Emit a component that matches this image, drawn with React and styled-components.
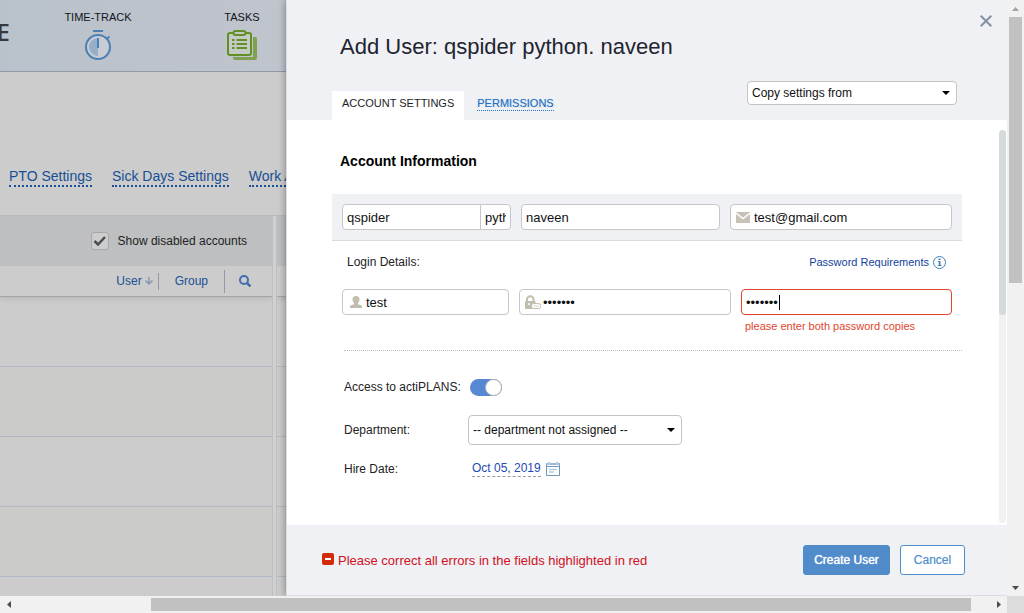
import React from "react";
import styled, { createGlobalStyle } from "styled-components";

const GlobalStyle = createGlobalStyle`
  *, *::before, *::after { box-sizing: border-box; }
  html, body { margin: 0; height: 100%; }
  body, button, input, select { font-family: "Liberation Sans", Arial, sans-serif; }
  body { font-size: 12px; color: #222; }
  #root { height: 100%; }
  button, input, select { margin: 0; }
`;

/* ---------- window frame ---------- */
const Frame = styled.div`
  display: grid;
  grid-template-columns: minmax(0, 1fr) 17px;
  grid-template-rows: minmax(0, 1fr) 17px;
  height: 100vh;
  overflow: hidden;
`;
const Screen = styled.main`
  display: flex;
  min-width: 0;
  overflow: hidden;
  background: #cccccc;
`;
const Bar = styled.div`
  display: flex;
  flex-direction: ${(p) => (p.$vertical ? "column" : "row")};
  background: #f1f1f1;
  padding: ${(p) => (p.$vertical ? "0 2px" : "2px 0")};
`;
const BarArrow = styled.span`
  display: flex;
  flex: 0 0 17px;
  align-items: center;
  justify-content: center;
  svg { display: block; }
`;
const BarPart = styled.span`
  flex: ${(p) => p.$size} 1 0;
  background: ${(p) => (p.$thumb ? "#c1c1c1" : "transparent")};
`;
const Corner = styled.div`
  background: #dcdcdc;
`;

/* ---------- page behind the dialog ---------- */
const Backdrop = styled.section`
  display: flex;
  flex-direction: column;
  flex: 0 0 286px;
  min-width: 0;
  overflow: hidden;
`;
const TopNav = styled.header`
  display: flex;
  flex: 0 0 72px;
  background: linear-gradient(90deg, #b9c2cb 0, #bec3cb 180px, #c0c4cd 100%);
  border-bottom: 1px solid #8f9aa8;
`;
const Logo = styled.div`
  display: flex;
  justify-content: flex-end;
  flex: 0 0 10px;
  overflow: hidden;
  margin-right: 16px;
  padding-top: 15px;
  font: 600 24px/34px "Open Sans", sans-serif;
  color: #35383c;
`;
const NavItem = styled.a`
  display: flex;
  flex: 0 0 144px;
  flex-direction: column;
  align-items: center;
  gap: 5px;
  padding-top: 10px;
  font-size: 11px;
  line-height: 14px;
  color: #10141c;
  text-decoration: none;
`;
const SubNav = styled.nav`
  display: flex;
  gap: 20px;
  flex: 0 0 144px;
  padding: 96px 0 0 9px;
  border-bottom: 1px solid #b6babf;
`;
const SubLink = styled.a`
  align-self: flex-start;
  flex: none;
  font-size: 14px;
  line-height: 17px;
  color: #184f95;
  text-decoration: none;
  border-bottom: 2px dotted #184f95;
`;
const Columns = styled.div`
  display: flex;
  flex: 1;
  min-height: 0;
  overflow: hidden;
`;
const Column = styled.div`
  display: flex;
  flex-direction: column;
  flex: ${(p) => p.$flex};
`;
const Splitter = styled.div`
  flex: 0 0 5px;
  background: #d0d0d0;
  border: solid #bebfc1;
  border-width: 0 1px;
`;
const Toolbar = styled.div`
  display: flex;
  flex: 0 0 50px;
  align-items: center;
  justify-content: flex-end;
  padding-right: 25px;
  background: #bdbfc1;
`;
const CheckLabel = styled.label`
  display: flex;
  align-items: center;
  gap: 9px;
  line-height: 16px;
`;
const CheckBox = styled.input`
  appearance: none;
  width: 18px;
  height: 18px;
  border: 1px solid #a8a8a8;
  border-radius: 3px;
  background: #cdcdcd;
`;
const CheckWrap = styled.span`
  position: relative;
  display: flex;
  svg { position: absolute; inset: 0; pointer-events: none; }
`;
const ListHead = styled.div`
  display: flex;
  flex: 0 0 31px;
  align-items: center;
  justify-content: flex-end;
  padding-right: 21px;
  background: #cccccc;
  border-bottom: 1px solid #a4a5a6;
  box-shadow: 0 2px 6px rgba(0, 0, 0, 0.1);
  clip-path: inset(0 0 -12px 0);
`;
const HeadButton = styled.button`
  display: flex;
  align-items: center;
  gap: 3px;
  padding: 0;
  border: 0;
  background: none;
  font-size: 12px;
  color: #184f95;
`;
const Divider = styled.span`
  width: 1px;
  height: ${(p) => p.$height}px;
  margin: ${(p) => p.$margin};
  background: #969a9f;
`;
const ListRow = styled.div`
  flex: 0 0 70px;
  border-bottom: 1px solid #b0b9c4;
  background: ${(p) => (p.$odd ? "#cbcbc9" : "transparent")};
`;

/* ---------- dialog ---------- */
const Dialog = styled.section`
  position: relative;
  display: flex;
  flex-direction: column;
  flex: 1;
  min-width: 0;
  background: #fff;
  border: solid #dcdde0;
  border-width: 0 0 1px 1px;
  box-shadow: 0 0 8px rgba(0, 0, 0, 0.4);
`;
const DialogHead = styled.header`
  display: flex;
  flex: 0 0 120px;
  flex-direction: column;
  justify-content: space-between;
  background: #f0f1f5;
`;
const TitleRow = styled.div`
  display: flex;
  justify-content: space-between;
  padding: 10px 10px 0 53px;
`;
const Title = styled.h1`
  margin: 22px 0 0;
  font-size: 22px;
  line-height: 30px;
  font-weight: 400;
  color: #22242f;
`;
const CloseButton = styled.button`
  display: flex;
  align-self: flex-start;
  align-items: center;
  justify-content: center;
  width: 22px;
  height: 22px;
  padding: 0;
  border: 0;
  background: none;
`;
const TabRow = styled.div`
  display: flex;
  justify-content: space-between;
  align-items: flex-end;
  padding: 0 50px 0 45px;
`;
const Tabs = styled.nav`
  display: flex;
  align-items: center;
`;
const ActiveTab = styled.button`
  height: 29px;
  padding: 0 10px 6px;
  border: 0;
  background: #fff;
  font-size: 11px;
  color: #1c1e29;
`;
const TabLink = styled.a`
  margin: 0 0 4px 13px;
  font-size: 11px;
  line-height: 14px;
  color: #2471c4;
  text-decoration: none;
  text-shadow: 0 0 1px rgba(36, 113, 196, 0.4);
  border-bottom: 1px dotted #2471c4;
`;
const SelectWrap = styled.span`
  position: relative;
  display: block;
  width: ${(p) => p.$width}px;
  margin-bottom: ${(p) => p.$bottom || 0}px;
  svg {
    position: absolute;
    right: 7px;
    top: 50%;
    margin-top: -2px;
    pointer-events: none;
  }
`;
const Select = styled.select`
  appearance: none;
  display: block;
  width: 100%;
  height: ${(p) => p.$height}px;
  padding: 0 20px 0 4px;
  border: 1px solid #c4c4c4;
  border-radius: 4px;
  background: #fff;
  font-size: 12px;
  color: #111;
`;
const DialogBody = styled.div`
  display: flex;
  flex: 1;
  min-height: 0;
`;
const Form = styled.form`
  flex: 1;
  min-width: 0;
  padding: 0 37px 0 45px;
`;
const InnerTrack = styled.div`
  flex: 0 0 7px;
  margin: 10px 1px 2px 0;
  border-radius: 4px;
  background: #f0f2f2;
`;
const InnerThumb = styled.div`
  height: 47%;
  border-radius: 4px;
  background: #d5dadd;
`;
const SectionTitle = styled.h2`
  margin: 32px 0 24px 8px;
  font-size: 14px;
  line-height: 18px;
  font-weight: 700;
  color: #000;
`;
const Fields = styled.div`
  display: grid;
  grid-template-columns: ${(p) => p.$columns};
  gap: 10px;
  align-items: start;
  padding: 0 10px;
`;
const NameBand = styled(Fields)`
  padding: 10px;
  background: #f0f1f5;
  border-bottom: 1px solid #d8dade;
`;
const Field = styled.label`
  position: relative;
  display: flex;
  align-items: center;
  gap: ${(p) => p.$gap || 4}px;
  height: 26px;
  padding-left: ${(p) => p.$left || 4}px;
  overflow: hidden;
  background: #fff;
  border: 1px solid ${(p) => (p.$error ? "#e0452f" : "#c6c7c8")};
  border-radius: 4px;
  svg { flex: none; }
`;
const Input = styled.input`
  flex: 1 1 0;
  min-width: 0;
  height: 24px;
  padding: 0;
  border: 0;
  outline: 0;
  background: none;
  font-size: 13px;
  color: #111;
`;
const SplitField = styled.div`
  display: grid;
  grid-template-columns: minmax(0, 1fr) 30px;
  height: 26px;
  background: #fff;
  border: 1px solid #c6c7c8;
  border-radius: 4px;
`;
const SplitInput = styled(Input)`
  padding: 0 4px;
  border-left: ${(p) => (p.$second ? "1px solid #c6c7c8" : "0")};
`;
const Caret = styled.span`
  position: absolute;
  left: 37px;
  top: 5px;
  width: 1px;
  height: 15px;
  background: #000;
`;
const LoginHead = styled.div`
  display: flex;
  align-items: center;
  justify-content: space-between;
  height: 48px;
  padding: 0 16px 6px 15px;
`;
const HelpLink = styled.a`
  display: flex;
  align-items: center;
  gap: 4px;
  font-size: 11px;
  color: #123f9c;
  text-decoration: none;
`;
const ErrorNote = styled.p`
  margin: 4px 0 0 4px;
  font-size: 11px;
  line-height: 14px;
  color: #e0452f;
`;
const Separator = styled.hr`
  margin: 17px 0 0 12px;
  border: 0;
  border-top: 1px dotted #bdbdbd;
`;
const Settings = styled.div`
  display: grid;
  grid-template-columns: 124px minmax(0, 1fr);
  grid-template-rows: 58px 28px 50px;
  align-items: center;
  padding: 7px 0 0 12px;
`;
const SettingValue = styled.div`
  display: flex;
  align-items: center;
  gap: 5px;
  padding-left: ${(p) => p.$left || 0}px;
`;
const Toggle = styled.input`
  appearance: none;
  width: 32px;
  height: 17px;
  border-radius: 9px;
  background: #5788d4;
  &::after {
    content: "";
    display: block;
    width: 17px;
    height: 17px;
    margin-left: 15px;
    border: 1px solid #b4b4b4;
    border-radius: 50%;
    background: #fff;
  }
`;
const DateLink = styled.a`
  font-size: 12px;
  line-height: 15px;
  color: #1d4bb4;
  text-decoration: none;
  border-bottom: 1px dashed #9a9a9a;
`;
const DialogFoot = styled.footer`
  display: flex;
  flex: 0 0 70px;
  align-items: center;
  gap: 10px;
  padding: 0 42px 0 35px;
  background: #f0f1f5;
`;
const ErrorMessage = styled.p`
  display: flex;
  flex: 1;
  align-items: center;
  gap: 4px;
  margin: 0;
  font-size: 13px;
  color: #d0101c;
`;
const Button = styled.button`
  width: ${(p) => (p.$primary ? 87 : 65)}px;
  height: 30px;
  padding: 0;
  border: 1px solid #508cca;
  border-radius: 3px;
  background: ${(p) => (p.$primary ? "#508cca" : "#fff")};
  color: ${(p) => (p.$primary ? "#fff" : "#508cca")};
  font-size: 12px;
  text-shadow: ${(p) => (p.$primary ? "0 0 1px #fff" : "0 0 1px rgba(80, 140, 202, 0.4)")};
`;

/* ---------- icons ---------- */
const Tri = ({ d, w, h, fill = "#4c4c4c" }) => (
  <svg width={w} height={h} viewBox={`0 0 ${w} ${h}`} aria-hidden="true">
    <path d={d} fill={fill} />
  </svg>
);
const SelectArrow = () => <Tri w={8} h={4} d="M0 0h8L4 4z" fill="#000" />;

const StopwatchIcon = () => (
  <svg width="28" height="32" viewBox="0 0 28 32" fill="none" aria-hidden="true">
    <path d="M9 2h10" stroke="#4a80b5" strokeWidth="2" />
    <circle cx="14" cy="18" r="12" stroke="#4a80b5" strokeWidth="2" fill="#c9cdd3" />
    <path d="M14 9a9 9 0 0 0 0 18z" fill="#96aec8" />
    <path d="M14 9v10" stroke="#4a80b5" strokeWidth="2" />
    <path d="M22.500 10l3-2.500" stroke="#4a80b5" strokeWidth="2" />
  </svg>
);
const TasksIcon = () => (
  <svg width="30" height="32" viewBox="0 0 30 32" fill="none" aria-hidden="true">
    <path d="M6 28h20V8h2a2 2 0 0 1 2 2v19a2 2 0 0 1-2 2H8a2 2 0 0 1-2-2z" fill="#80a052" />
    <rect x="1" y="4" width="23" height="22" rx="2" stroke="#648f25" strokeWidth="2" fill="#c4cbc6" />
    <rect x="6.500" y="2" width="12" height="4" rx="2" stroke="#648f25" strokeWidth="2" fill="#c4cbc6" />
    <path d="M5 11h2.500M5 15h2.500M5 19h2.500M9.500 11H20M9.500 15H20M9.500 19H20" stroke="#648f25" strokeWidth="2" />
  </svg>
);
const CheckIcon = () => (
  <svg width="18" height="18" viewBox="0 0 18 18" fill="none" aria-hidden="true">
    <path d="M3.500 9l3.500 3.500L14 5" stroke="#454d55" strokeWidth="2.500" />
  </svg>
);
const SortIcon = () => (
  <svg width="8" height="8" viewBox="0 0 8 8" fill="none" aria-hidden="true">
    <path d="M4 0v7M.5 3.500L4 7l3.500-3.500" stroke="#8498b0" strokeWidth="1.500" />
  </svg>
);
const SearchIcon = () => (
  <svg width="12" height="12" viewBox="0 0 12 12" fill="none" aria-hidden="true">
    <circle cx="5" cy="5" r="4" stroke="#426fae" strokeWidth="2" />
    <path d="M8 8l3.500 3.500" stroke="#426fae" strokeWidth="2.500" />
  </svg>
);
const CloseIcon = () => (
  <svg width="12" height="12" viewBox="0 0 12 12" fill="none" aria-hidden="true">
    <path d="M.7.7l10.600 10.600M11.300.7L.7 11.300" stroke="#8491a8" strokeWidth="2" />
  </svg>
);
const MailIcon = () => (
  <svg width="14" height="11" viewBox="0 0 14 11" aria-hidden="true">
    <path d="M0 0h14v11H0z" fill="#c8c2b6" />
    <path d="M0 1l7 5.500L14 1" fill="none" stroke="#fff" strokeWidth="1.400" />
  </svg>
);
const PersonIcon = () => (
  <svg width="12" height="12" viewBox="0 0 12 12" fill="#c3bdb0" aria-hidden="true">
    <path d="M6 0c2.300 0 3.500 1.300 3.500 3.300C9.500 5 8.800 6.200 8 7v1.200L11 9.300c.7.300 1 1 1 2.700H0c0-1.700.3-2.400 1-2.700l3-1.100V7C3.200 6.200 2.500 5 2.500 3.300 2.500 1.300 3.700 0 6 0z" />
  </svg>
);
const LockIcon = () => (
  <svg width="16" height="14" viewBox="0 0 16 14" aria-hidden="true">
    <path d="M2 6V4.500a3.300 3.300 0 0 1 6.600 0V6" fill="none" stroke="#c3bdb0" strokeWidth="2" />
    <path d="M0 6h10.500v8H0z" fill="#c3bdb0" />
    <circle cx="4" cy="9" r="1" fill="#fff" />
    <rect x="6.500" y="8.500" width="9" height="5" rx="2" fill="#fff" stroke="#c3bdb0" />
    <path d="M8.500 11h1M10.500 11h1M12.500 11h1" stroke="#b0aa9c" />
  </svg>
);
const InfoIcon = () => (
  <svg width="13" height="13" viewBox="0 0 13 13" fill="none" aria-hidden="true">
    <circle cx="6.500" cy="6.500" r="6" stroke="#4282b4" />
    <path d="M5.500 2.500h2v1.500h-2zM5 5h2.500v4H8.500v1H4.800V9h1V6H5z" fill="#4282b4" />
  </svg>
);
const CalendarIcon = () => (
  <svg width="14" height="14" viewBox="0 0 14 14" fill="none" aria-hidden="true">
    <path d="M.5 2v11.500h13V2M0 4.500h14" stroke="#6e98b9" />
    <path d="M0 1h2v2H0zM4 1h6v2H4zM12 1h2v2h-2z" fill="#9ab8cf" />
    <path d="M3 0v3M11 0v3" stroke="#6e98b9" />
    <path d="M3 7.500h8M3 10h5" stroke="#b5cbdc" strokeWidth="1.500" />
  </svg>
);
const ErrorIcon = () => (
  <svg width="12" height="14" viewBox="0 0 12 14" aria-hidden="true">
    <rect width="12" height="12" rx="2" fill="#d32a08" />
    <path d="M3 5h6v2H3z" fill="#fff" />
  </svg>
);

const ROWS = [0, 1, 2, 3, 4];

export default function App() {
  return (
    <Frame>
      <GlobalStyle />
      <Screen>
        <Backdrop>
          <TopNav>
            <Logo>E</Logo>
            <NavItem href="#time">TIME-TRACK<StopwatchIcon /></NavItem>
            <NavItem href="#tasks">TASKS<TasksIcon /></NavItem>
          </TopNav>
          <SubNav>
            <SubLink href="#pto">PTO Settings</SubLink>
            <SubLink href="#sick">Sick Days Settings</SubLink>
            <SubLink href="#work">Work A</SubLink>
          </SubNav>
          <Columns>
            <Column $flex="0 0 272px">
              <Toolbar>
                <CheckLabel>
                  <CheckWrap>
                    <CheckBox type="checkbox" defaultChecked />
                    <CheckIcon />
                  </CheckWrap>
                  Show disabled accounts
                </CheckLabel>
              </Toolbar>
              <ListHead>
                <HeadButton type="button">User<SortIcon /></HeadButton>
                <Divider $height={17} $margin="0 16px 0 5px" />
                <HeadButton type="button">Group</HeadButton>
                <Divider $height={23} $margin="0 14px 0 16px" />
                <HeadButton type="button" aria-label="Search"><SearchIcon /></HeadButton>
              </ListHead>
              {ROWS.map((n) => <ListRow key={n} $odd={n % 2 === 1} />)}
            </Column>
            <Splitter />
            <Column $flex="1">
              <Toolbar />
              <ListHead />
              {ROWS.map((n) => <ListRow key={n} $odd={n % 2 === 1} />)}
            </Column>
          </Columns>
        </Backdrop>

        <Dialog role="dialog" aria-labelledby="dialog-title">
          <DialogHead>
            <TitleRow>
              <Title id="dialog-title">Add User: qspider python. naveen</Title>
              <CloseButton type="button" aria-label="Close"><CloseIcon /></CloseButton>
            </TitleRow>
            <TabRow>
              <Tabs>
                <ActiveTab type="button">ACCOUNT SETTINGS</ActiveTab>
                <TabLink href="#permissions">PERMISSIONS</TabLink>
              </Tabs>
              <SelectWrap $width={210} $bottom={15}>
                <Select $height={24} aria-label="Copy settings from">
                  <option>Copy settings from</option>
                </Select>
                <SelectArrow />
              </SelectWrap>
            </TabRow>
          </DialogHead>

          <DialogBody>
            <Form>
              <SectionTitle>Account Information</SectionTitle>
              <NameBand $columns="169fr 199fr 222fr">
                <SplitField>
                  <SplitInput aria-label="First name" defaultValue="qspider" />
                  <SplitInput aria-label="Middle name" $second defaultValue="python" />
                </SplitField>
                <Field><Input aria-label="Last name" defaultValue="naveen" /></Field>
                <Field $left={5}>
                  <MailIcon />
                  <Input aria-label="Email" defaultValue="test@gmail.com" />
                </Field>
              </NameBand>
              <LoginHead>
                <span>Login Details:</span>
                <HelpLink href="#requirements">Password Requirements<InfoIcon /></HelpLink>
              </LoginHead>
              <Fields $columns="167fr 212fr 211fr">
                <Field $left={7}>
                  <PersonIcon />
                  <Input aria-label="Username" defaultValue="test" />
                </Field>
                <Field $left={5} $gap={2}>
                  <LockIcon />
                  <Input type="password" aria-label="Password" defaultValue="1234567" />
                </Field>
                <div>
                  <Field $error>
                    <Input type="password" aria-label="Retype password" defaultValue="1234567" />
                    <Caret />
                  </Field>
                  <ErrorNote>please enter both password copies</ErrorNote>
                </div>
              </Fields>
              <Separator />
              <Settings>
                <label htmlFor="access">Access to actiPLANS:</label>
                <SettingValue $left={2}>
                  <Toggle id="access" type="checkbox" role="switch" defaultChecked />
                </SettingValue>
                <label htmlFor="department">Department:</label>
                <SelectWrap $width={214}>
                  <Select id="department" $height={30}>
                    <option>-- department not assigned --</option>
                  </Select>
                  <SelectArrow />
                </SelectWrap>
                <span>Hire Date:</span>
                <SettingValue $left={4}>
                  <DateLink href="#date">Oct 05, 2019</DateLink>
                  <CalendarIcon />
                </SettingValue>
              </Settings>
            </Form>
            <InnerTrack><InnerThumb /></InnerTrack>
          </DialogBody>

          <DialogFoot>
            <ErrorMessage role="alert">
              <ErrorIcon />
              Please correct all errors in the fields highlighted in red
            </ErrorMessage>
            <Button type="submit" $primary>Create User</Button>
            <Button type="button">Cancel</Button>
          </DialogFoot>
        </Dialog>
      </Screen>

      <Bar $vertical>
        <BarArrow><Tri w={7} h={4} d="M0 4h7L3.500 0z" fill="#a3a3a3" /></BarArrow>
        <BarPart $size={266} $thumb />
        <BarPart $size={296} />
        <BarArrow><Tri w={7} h={4} d="M0 0h7L3.500 4z" /></BarArrow>
      </Bar>
      <Bar>
        <BarArrow><Tri w={4} h={7} d="M4 0v7L0 3.500z" /></BarArrow>
        <BarPart $size={134} />
        <BarPart $size={820} $thumb />
        <BarPart $size={19} />
        <BarArrow><Tri w={4} h={7} d="M0 0v7l4-3.500z" /></BarArrow>
      </Bar>
      <Corner />
    </Frame>
  );
}
